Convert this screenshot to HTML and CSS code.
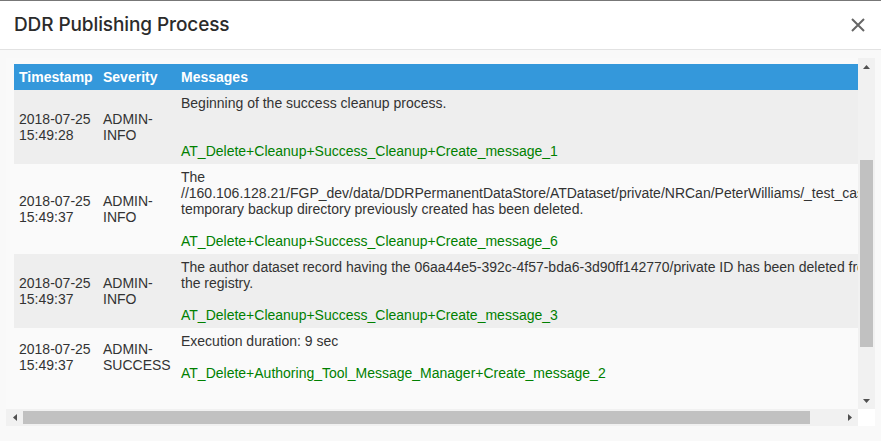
FILE: index.html
```html
<!DOCTYPE html>
<html lang="en">
<head>
<meta charset="utf-8">
<title>DDR Publishing Process</title>
<link rel="stylesheet" href="styles.css">
</head>
<body>
<div class="modal">
  <header class="modal-header">
    <h1 class="modal-title">DDR Publishing Process</h1>
    <button class="close" aria-label="Close">
      <svg width="14" height="14" viewBox="0 0 14 14"><path d="M1 1 L13 13 M13 1 L1 13" stroke="#666" stroke-width="2" fill="none"/></svg>
    </button>
  </header>
  <div class="modal-body">
    <div class="scrollbox">
      <div class="viewport">
        <table class="log">
          <colgroup><col class="c-ts"><col class="c-sev"><col class="c-msg"></colgroup>
          <thead>
            <tr><th>Timestamp</th><th>Severity</th><th>Messages</th></tr>
          </thead>
          <tbody>
            <tr>
              <td class="mid">2018-07-25 15:49:28</td>
              <td class="mid">ADMIN-INFO</td>
              <td>Beginning of the success cleanup process.<br><br><br><span class="code">AT_Delete+Cleanup+Success_Cleanup+Create_message_1</span></td>
            </tr>
            <tr>
              <td class="mid">2018-07-25 15:49:37</td>
              <td class="mid">ADMIN-INFO</td>
              <td>The //160.106.128.21/FGP_dev/data/DDRPermanentDataStore/ATDataset/private/NRCan/PeterWilliams/_test_case_cleanup temporary backup directory previously created has been deleted.<br><br><span class="code">AT_Delete+Cleanup+Success_Cleanup+Create_message_6</span></td>
            </tr>
            <tr>
              <td class="mid">2018-07-25 15:49:37</td>
              <td class="mid">ADMIN-INFO</td>
              <td>The author dataset record having the 06aa44e5-392c-4f57-bda6-3d90ff142770/private ID has been deleted from the registry.<br><br><span class="code">AT_Delete+Cleanup+Success_Cleanup+Create_message_3</span></td>
            </tr>
            <tr>
              <td class="mid">2018-07-25 15:49:37</td>
              <td class="mid">ADMIN-SUCCESS</td>
              <td>Execution duration: 9 sec<br><br><span class="code">AT_Delete+Authoring_Tool_Message_Manager+Create_message_2</span></td>
            </tr>
          </tbody>
        </table>
      </div>
      <div class="vscroll">
        <div class="sb-btn"><svg width="7" height="4" viewBox="0 0 7 4"><path d="M3.5 0 L7 4 L0 4 Z" fill="#505050"/></svg></div>
        <div class="vtrack"><div class="vthumb"></div></div>
        <div class="sb-btn"><svg width="7" height="4" viewBox="0 0 7 4"><path d="M0 0 L7 0 L3.5 4 Z" fill="#505050"/></svg></div>
      </div>
      <div class="hscroll">
        <div class="sb-btn"><svg width="4" height="7" viewBox="0 0 4 7"><path d="M4 0 L4 7 L0 3.5 Z" fill="#505050"/></svg></div>
        <div class="htrack"><div class="hthumb"></div></div>
        <div class="sb-btn"><svg width="4" height="7" viewBox="0 0 4 7"><path d="M0 0 L4 3.5 L0 7 Z" fill="#505050"/></svg></div>
      </div>
      <div class="corner"></div>
    </div>
  </div>
</div>
</body>
</html>
```

FILE: styles.css
```css
* { box-sizing: border-box; }
html, body { margin: 0; padding: 0; }
body {
  width: 881px;
  height: 441px;
  overflow: hidden;
  background: #f9f9f9;
  font-family: "Liberation Sans", Arial, sans-serif;
  font-size: 14px;
  color: #333;
}
.modal {
  display: flex;
  flex-direction: column;
  height: 441px;
}
.modal-header {
  height: 50px;
  border-top: 1px solid #777;
  border-bottom: 1px solid #e2e2e2;
  background: #fff;
  display: flex;
  align-items: center;
  justify-content: space-between;
  padding: 0 16px 0 14px;
}
.modal-title {
  margin: 0;
  font-family: Inter, Roboto, "Liberation Sans", sans-serif;
  font-size: 19px;
  font-weight: 500;
  letter-spacing: -0.1px;
  color: #2b2b2b;
  line-height: 22px;
}
.close {
  border: 0;
  background: transparent;
  padding: 0;
  width: 14px;
  height: 14px;
  display: flex;
  cursor: pointer;
}
.modal-body {
  flex: 1;
  padding: 8px 6px 15px 6px;
  display: flex;
}
.scrollbox {
  flex: 1;
  display: grid;
  grid-template-columns: minmax(0, 1fr) 17px;
  grid-template-rows: minmax(0, 1fr) 17px;
}
.viewport {
  min-width: 0;
  overflow: hidden;
  background: #fafafa;
  padding: 6px 0 0 8px;
}
.log {
  table-layout: fixed;
  width: 880px;
  border-collapse: collapse;
  border-spacing: 0;
  line-height: 16px;
}
.c-ts { width: 84px; }
.c-sev { width: 78px; }
.c-msg { width: 718px; }
.log th {
  background: #3498db;
  color: #fff;
  font-weight: bold;
  text-align: left;
  padding: 5px;
}
.log td {
  padding: 5px;
  vertical-align: top;
  color: #333;
}
.log td.mid { vertical-align: middle; }
.log tbody tr:nth-child(odd) { background: #eeeeee; }
.log tbody tr:nth-child(even) { background: #fafafa; }
.code { color: #008000; }

.vscroll {
  background: #f1f1f1;
  display: flex;
  flex-direction: column;
}
.hscroll {
  background: #f1f1f1;
  display: flex;
}
.sb-btn {
  width: 17px;
  height: 17px;
  flex: none;
  display: flex;
  align-items: center;
  justify-content: center;
}
.vtrack { flex: 1; }
.vthumb {
  margin: 85px 0 0 2px;
  width: 13px;
  height: 187px;
  background: #c1c1c1;
}
.htrack { flex: 1; }
.hthumb {
  margin: 2px 0 0 0;
  width: 787px;
  height: 13px;
  background: #c1c1c1;
}
.corner { background: #fff; }
```
